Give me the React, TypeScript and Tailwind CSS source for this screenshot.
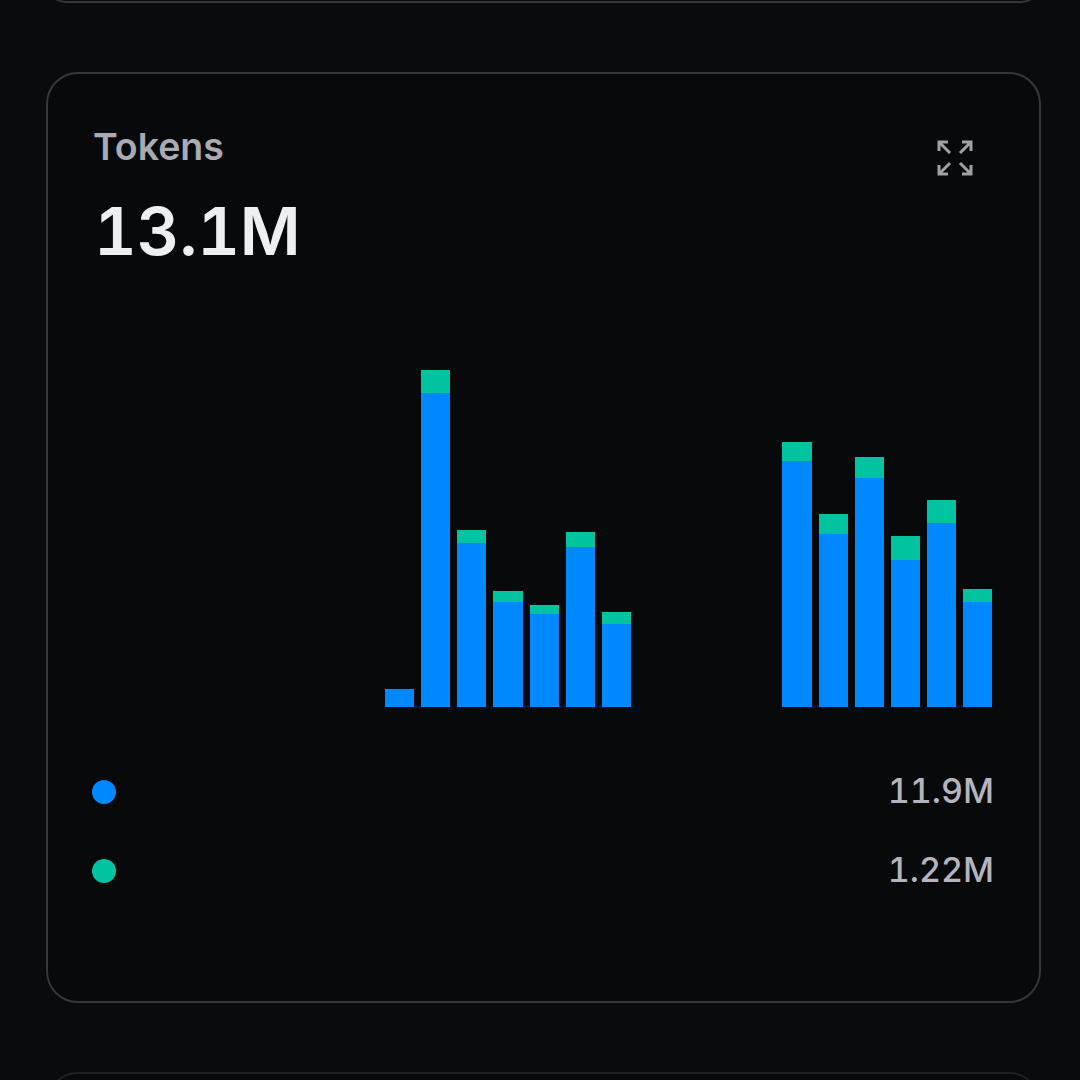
const bars: ([number, number] | null)[] = [
  null, null, null, null, null, null, null, null,
  [18, 0], [314, 23], [164, 13], [105, 11], [93, 9], [160, 15], [83, 12],
  null, null, null, null,
  [246, 19], [173, 20], [229, 21], [147, 24], [184, 23], [105, 13],
];

export default function App() {
  return (
    <div className="w-[1080px] h-[1080px] overflow-hidden bg-[#0a0b0d] flex flex-col gap-[69px] pl-[46px] pr-[39px] font-['Inter','Liberation_Sans',sans-serif] tabular-nums">
      <div className="h-[40px] shrink-0 -mt-[37px] rounded-[32px] border-2 border-[#36373b] bg-[#08090b]" />
      <div className="h-[931px] shrink-0 rounded-[32px] border-2 border-[#36373b] bg-[#08090b] pt-[50px] pl-[45px] pr-[45px] flex flex-col">
        <div className="flex justify-between items-start">
          <div>
            <div className="text-[37.5px] leading-[48px] font-semibold text-[#a9aab2] -mt-[1px]">Tokens</div>
            <div className="mt-[18px] ml-[1px] text-[66px] leading-[84px] font-semibold text-[#eeeff2]">13.1M</div>
          </div>
          <svg className="w-[36px] h-[36px] mt-[16px] mr-[21px] text-[#a0a1a8]" viewBox="0 0 36 36" fill="none" stroke="currentColor" strokeWidth="3">
            <path d="M2 11V2h9M2 2l11 11M25 2h9v9M34 2L23 13M2 25v9h9M2 34l11-11M25 34h9v-9M34 34L23 23" />
          </svg>
        </div>
        <div className="mt-[94px] h-[340px] flex items-end gap-[7px] pl-[3px] pr-[2px]">
          {bars.map((b, i) => (
            <div key={i} className="flex-1 flex flex-col">
              {b && b[1] > 0 && <div className="bg-[#00c49f]" style={{ height: b[1] }} />}
              {b && <div className="bg-[#0088fe]" style={{ height: b[0] }} />}
            </div>
          ))}
        </div>
        <div className="mt-[63px] flex flex-col gap-[37px] text-[34px] leading-[42px] font-medium text-[#b4b5bc]">
          <div className="flex items-center justify-between">
            <span className="w-[24px] h-[24px] rounded-full bg-[#0088fe] -ml-[1px] translate-y-[1px]" />
            <span>11.9M</span>
          </div>
          <div className="flex items-center justify-between">
            <span className="w-[24px] h-[24px] rounded-full bg-[#00c49f] -ml-[1px] translate-y-[1px]" />
            <span>1.22M</span>
          </div>
        </div>
      </div>
      <div className="h-[100px] shrink-0 rounded-[32px] border-2 border-[#1f2024] bg-[#08090b]" />
    </div>
  );
}
